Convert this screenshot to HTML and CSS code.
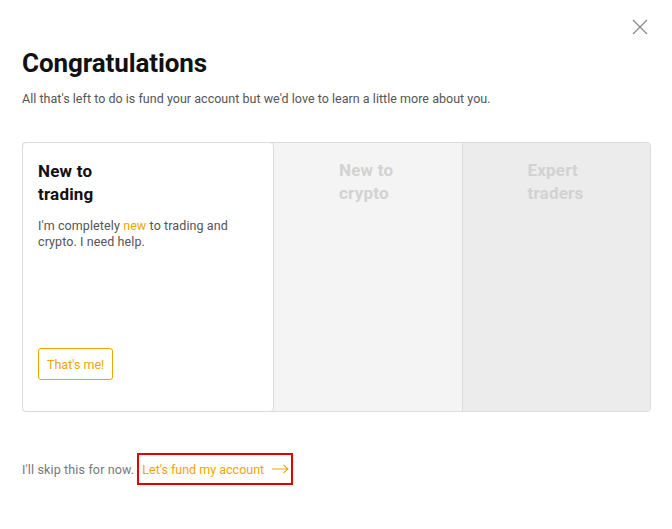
FILE: index.html
```html
<!DOCTYPE html>
<html>
<head>
<meta charset="utf-8">
<link rel="stylesheet" href="styles.css">
</head>
<body>
<div class="modal">
  <button class="close" aria-label="Close">
    <svg width="16" height="16" viewBox="0 0 16 16"><path d="M1 1L15 15M15 1L1 15" stroke="#8a8a8a" stroke-width="1.3" fill="none"/></svg>
  </button>
  <h1 class="title">Congratulations</h1>
  <p class="subtitle">All that's left to do is fund your account but we'd love to learn a little more about you.</p>
  <div class="options">
    <div class="card active">
      <h2 class="card-title">New to<br>trading</h2>
      <p class="card-text">I'm completely <span class="hl">new</span> to trading and crypto. I need help.</p>
      <button class="btn">That's me!</button>
    </div>
    <div class="card mid">
      <h2 class="card-title faded">New to<br>crypto</h2>
    </div>
    <div class="card last">
      <h2 class="card-title faded">Expert<br>traders</h2>
    </div>
  </div>
  <div class="footer">
    <span class="skip">I'll skip this for now.</span>
    <a class="fund" href="#">Let's fund my account
      <svg width="17" height="10" viewBox="0 0 17 10"><path d="M0 5H16M11.5 0.8L16 5L11.5 9.2" stroke="#f0a500" stroke-width="1.1" fill="none"/></svg>
    </a>
  </div>
</div>
</body>
</html>
```

FILE: styles.css
```css
* { box-sizing: border-box; }
html, body { margin: 0; padding: 0; background: #fff; }
body { font-family: "Roboto", "Liberation Sans", sans-serif; color: #222; }
.modal { position: relative; width: 672px; height: 529px; padding: 46px 21px 0 22px; }
.close { position: absolute; top: 19px; right: 24px; width: 16px; height: 16px; padding: 0; border: 0; background: none; }
.close svg { display: block; }
.title { margin: 0; font-size: 26px; font-weight: 700; line-height: 34px; color: #111; letter-spacing: -0.1px; }
.subtitle { margin: 11px 0 0; font-size: 12.5px; line-height: 16px; color: #555; letter-spacing: 0.03px; }
.options { display: flex; margin-top: 35px; height: 270px; border: 1px solid #dcdcdc; border-radius: 4px; background: #f4f4f4; }
.card { display: flex; flex-direction: column; }
.card.active { width: 252px; margin: -1px 0 -1px -1px; background: #fff; border: 1px solid #dcdcdc; border-radius: 4px; padding: 17px 15px 31px; }
.card.mid { width: 189px; background: #f4f4f4; border-right: 1px solid #dcdcdc; align-items: center; padding-top: 16px; }
.card.last { flex: 1; background: #ececec; align-items: center; padding-top: 16px; border-radius: 0 4px 4px 0; }
.card-title { margin: 0; font-size: 17px; font-weight: 700; line-height: 23px; color: #111; letter-spacing: 0.2px; }
.card-title.faded { color: #d2d2d2; }
.card.mid .card-title, .card.last .card-title { width: 58px; }
.card-text { margin: 12px 0 0; font-size: 12.5px; line-height: 16px; color: #555; width: 210px; letter-spacing: 0.1px; }
.hl { color: #f0a500; }
.btn { margin-top: auto; align-self: flex-start; height: 32px; padding: 0 8px; border: 1px solid #f0a500; border-radius: 3px; background: #fff; color: #f0a500; font-family: inherit; font-size: 12.5px; }
.footer { display: flex; align-items: center; margin-top: 41px; font-size: 12.5px; letter-spacing: 0; }
.skip { color: #777; letter-spacing: 0.14px; }
.fund { display: flex; align-items: center; gap: 8px; margin-left: 3px; height: 32px; padding: 0 2px 0 3px; border: 2px solid #e60000; color: #f0a500; text-decoration: none; }
.fund svg { display: block; }
```
